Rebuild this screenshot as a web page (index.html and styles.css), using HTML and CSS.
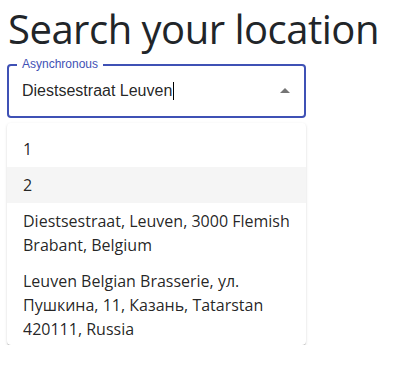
FILE: index.html
```html
<!DOCTYPE html>
<html lang="en">
<head>
    <meta charset="UTF-8">
    <meta name="viewport" content="width=device-width, initial-scale=1.0">
    <title>Search your location</title>
    <link rel="stylesheet" href="styles.css">
</head>
<body>

    <div class="page">
        <h1>Search your location</h1>

        <div class="field">
            <span class="field-label">Asynchronous</span>
            <div class="field-value">Diestsestraat Leuven<span class="caret"></span></div>
            <svg class="field-arrow" viewBox="0 0 24 24" width="24" height="24">
                <path d="M7 14l5-5 5 5z"></path>
            </svg>
        </div>

        <ul class="options">
            <li>1</li>
            <li class="focused">2</li>
            <li>Diestsestraat, Leuven, 3000 Flemish Brabant, Belgium</li>
            <li>Leuven Belgian Brasserie, ул. Пушкина, 11, Казань, Tatarstan 420111, Russia</li>
        </ul>
    </div>

</body>
</html>
```

FILE: styles.css
```css
body {
    margin: 0;
    padding: 0;
    background: #FFFFFF;
    font-family: 'Open Sans', 'Noto Sans', sans-serif;
    color: #212529;
}

.page {
    padding: 0 8px;
}

h1 {
    margin: 0;
    padding-top: 5px;
    font-size: 40px;
    font-weight: 500;
    line-height: 48px;
    letter-spacing: -0.5px;
    color: #212529;
}

/* outlined input, focused */
.field {
    position: relative;
    box-sizing: border-box;
    width: 299px;
    height: 54px;
    margin: 11px 0 0 -1px;
    padding: 0 7px 0 13px;
    border: 2px solid #3F51B5;
    border-radius: 4px;
    display: flex;
    align-items: center;
    font-family: 'Liberation Sans', Arial, sans-serif;
}

.field-label {
    position: absolute;
    left: 8px;
    top: -9px;
    padding: 0 5px;
    background: #FFFFFF;
    font-size: 12px;
    line-height: 14px;
    color: #3F51B5;
}

.field-value {
    flex: 1;
    font-size: 16px;
    color: rgba(0, 0, 0, 0.87);
}

.caret {
    display: inline-block;
    width: 1px;
    height: 18px;
    margin-left: 1px;
    vertical-align: -4px;
    background: #000000;
}

.field-arrow {
    fill: rgba(0, 0, 0, 0.54);
}

.options {
    list-style: none;
    box-sizing: border-box;
    width: 299px;
    height: 222px;
    margin: 5px 0 0 -1px;
    padding: 8px 0 0;
    overflow: hidden;
    background: #FFFFFF;
    border-radius: 4px;
    box-shadow: 0px 2px 1px -1px rgba(0, 0, 0, 0.2), 0px 1px 1px 0px rgba(0, 0, 0, 0.14), 0px 1px 3px 0px rgba(0, 0, 0, 0.12);
}

.options li {
    padding: 6px 16px;
    font-size: 16px;
    line-height: 24px;
    color: rgba(0, 0, 0, 0.87);
}

.options li.focused {
    background: #F5F5F5;
}
```
